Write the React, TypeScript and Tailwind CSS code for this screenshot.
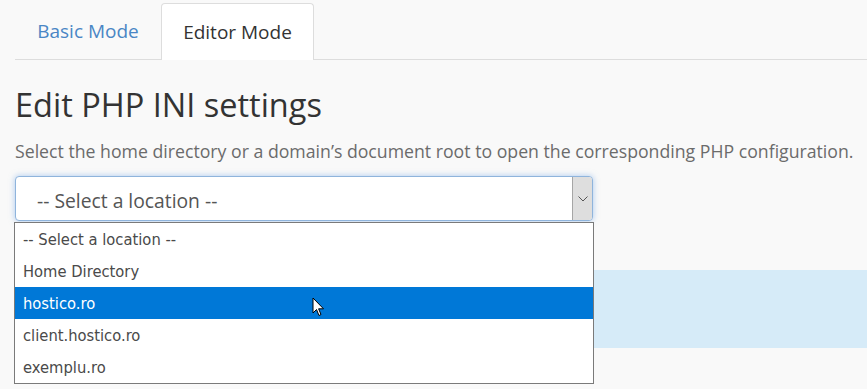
import React from 'react';

const options = ['-- Select a location --', 'Home Directory', 'hostico.ro', 'client.hostico.ro', 'exemplu.ro'];

const App = () => {
    return (
        <div className="relative w-[867px] h-[389px] overflow-hidden bg-[#f9f9f9] font-['Open_Sans',sans-serif]">
            {/* Tabs */}
            <div className="flex items-end pt-[3px] ml-[15px] border-b border-[#dddddd] h-[60px]">
                <div className="w-[146px] h-[56px] flex items-center justify-center text-[19px] text-[#4a86c5]">
                    Basic Mode
                </div>
                <div className="w-[153px] h-[57px] -mb-px flex items-center justify-center text-[19px] text-[#333333] bg-white border border-b-0 border-[#dddddd] rounded-t-[4px]">
                    Editor Mode
                </div>
            </div>

            {/* Header */}
            <div className="px-[15px]">
                <h1 className="mt-[25px] text-[32.5px] leading-[40px] text-[#333333]">Edit PHP INI settings</h1>
                <p className="mt-[14px] text-[17.7px] leading-[24px] text-[#6b6b6b] whitespace-nowrap">
                    Select the home directory or a domain’s document root to open the corresponding PHP configuration.
                </p>

                {/* Select */}
                <div className="mt-[13px] w-[578px] h-[45px] flex bg-white border border-[#8fb4dc] rounded-[4px] shadow-[0_0_6px_rgba(102,160,230,0.55)] overflow-hidden">
                    <div className="flex-1 flex items-center pl-[21px] pt-[5px] text-[19.3px] text-[#555555]">-- Select a location --</div>
                    <div className="w-[20px] flex items-center justify-center bg-[#dedede] border-l border-[#a6a6a6]">
                        <svg width="10" height="6" viewBox="0 0 10 6" fill="none">
                            <path d="M0.5 0.5 L5 5 L9.5 0.5" stroke="#555" strokeWidth="1" />
                        </svg>
                    </div>
                </div>
            </div>

            {/* Info panel behind the list */}
            <div className="absolute left-[593px] top-[270px] w-[274px] h-[78px] bg-[#d6ebf8]" />

            {/* Dropdown list */}
            <div className="absolute left-[14px] top-[222px] w-[580px] bg-white border border-[#7a7a7a] font-['DejaVu_Sans_Condensed','Liberation_Sans',sans-serif]">
                {options.map((opt, i) => (
                    <div
                        key={i}
                        className={`h-[32px] flex items-center pl-[8px] pt-[3px] text-[16.4px] ${i === 2 ? 'bg-[#0078d7] text-white' : 'text-[#4a4a4a]'}`}
                    >
                        {opt}
                    </div>
                ))}
            </div>

            {/* Mouse cursor */}
            <svg className="absolute left-[312px] top-[297px]" width="13" height="20" viewBox="0 0 13 20">
                <path d="M1 1 L1 16 L4.5 12.5 L7 18.5 L9 17.5 L6.6 11.8 L11.5 11.8 Z" fill="white" stroke="black" strokeWidth="1" strokeLinejoin="miter" />
            </svg>
        </div>
    );
};

export default App;
